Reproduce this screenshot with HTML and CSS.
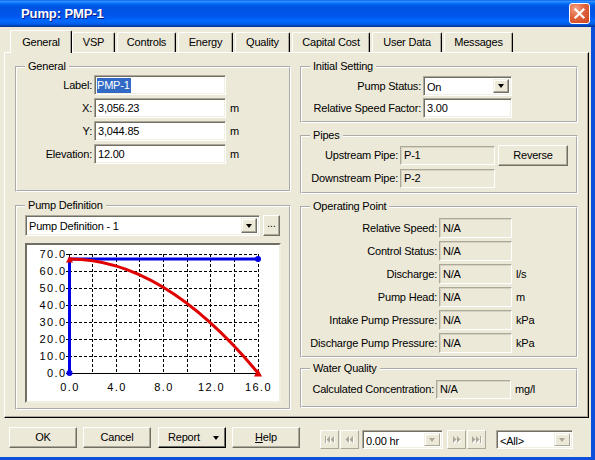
FILE: index.html
```html
<!DOCTYPE html>
<html>
<head>
<meta charset="utf-8">
<title>Pump: PMP-1</title>
<link rel="stylesheet" href="styles.css">
</head>
<body>
<div class="window">
  <div class="titlebar">
    <span class="title">Pump: PMP-1</span>
    <span class="close"><svg width="13" height="13" viewBox="0 0 13 13"><path d="M2.5 2.5 L10.5 10.5 M10.5 2.5 L2.5 10.5" stroke="#fff" stroke-width="2.2" stroke-linecap="square" fill="none"/></svg></span>
  </div>
  <div class="frame">
    <div class="client">
      <div class="tabs">
        <div class="tab active">General</div>
        <div class="tab t-vsp">VSP</div>
        <div class="tab t-controls">Controls</div>
        <div class="tab t-energy">Energy</div>
        <div class="tab t-quality">Quality</div>
        <div class="tab t-capital">Capital Cost</div>
        <div class="tab t-user">User Data</div>
        <div class="tab t-messages">Messages</div>
      </div>
      <div class="panel">
        <div class="col col-left">
          <fieldset class="grp grp-general">
            <legend>General</legend>
            <div class="rows rows-general">
              <div class="row"><span class="lbl lbl-gen">Label:</span><span class="field f-gen"><span class="sel">PMP-1</span></span></div>
              <div class="row"><span class="lbl lbl-gen">X:</span><span class="field f-gen">3,056.23</span><span class="unit">m</span></div>
              <div class="row"><span class="lbl lbl-gen">Y:</span><span class="field f-gen">3,044.85</span><span class="unit">m</span></div>
              <div class="row"><span class="lbl lbl-gen">Elevation:</span><span class="field f-gen">12.00</span><span class="unit">m</span></div>
            </div>
          </fieldset>
          <fieldset class="grp grp-pumpdef">
            <legend>Pump Definition</legend>
            <div class="pumpdef-top">
              <span class="combo combo-def"><span class="combo-text">Pump Definition - 1</span><span class="drop"><i class="tri"></i></span></span>
              <span class="btn-small">...</span>
            </div>
            <div class="chart">
              <svg width="252" height="156" viewBox="0 0 252 156">
                <g class="grid" stroke="#000" stroke-width="1" stroke-dasharray="3 2" fill="none">
                  <path d="M65.5 9 V128 M89.5 9 V128 M112.5 9 V128 M136.5 9 V128 M160.5 9 V128 M183.5 9 V128 M207.5 9 V128 M231.5 9 V128"/>
                  <path d="M42 9.5 H232 M42 26.5 H232 M42 43.5 H232 M42 60.5 H232 M42 77.5 H232 M42 94.5 H232 M42 111.5 H232"/>
                </g>
                <path d="M42.5 9 V128.5 H232 M39 9.5 H42 M39 26.5 H42 M39 43.5 H42 M39 60.5 H42 M39 77.5 H42 M39 94.5 H42 M39 111.5 H42 M39 128.5 H42" stroke="#000" stroke-width="1" fill="none"/>
                <g class="axis-text" font-family="Liberation Sans, Arial, sans-serif" font-size="11" letter-spacing="1.4" fill="#000">
                  <text x="39.5" y="13" text-anchor="end">70.0</text>
                  <text x="39.5" y="30" text-anchor="end">60.0</text>
                  <text x="39.5" y="47" text-anchor="end">50.0</text>
                  <text x="39.5" y="64" text-anchor="end">40.0</text>
                  <text x="39.5" y="81" text-anchor="end">30.0</text>
                  <text x="39.5" y="98" text-anchor="end">20.0</text>
                  <text x="39.5" y="115" text-anchor="end">10.0</text>
                  <text x="39.5" y="132" text-anchor="end">0.0</text>
                  <text x="43" y="146" text-anchor="middle">0.0</text>
                  <text x="90" y="146" text-anchor="middle">4.0</text>
                  <text x="137" y="146" text-anchor="middle">8.0</text>
                  <text x="184.5" y="146" text-anchor="middle">12.0</text>
                  <text x="231.5" y="146" text-anchor="middle">16.0</text>
                </g>
                <path d="M42.5 128 V14 H231" stroke="#0000E6" stroke-width="3" fill="none"/>
                <circle cx="42.5" cy="128" r="3" fill="#0000E6"/>
                <circle cx="231" cy="14" r="3" fill="#0000E6"/>
                <path d="M42.5 14 Q136.5 14 231 128" stroke="#E00000" stroke-width="3" fill="none"/>
                <polygon points="39,17.5 46,17.5 42.5,11" fill="#E00000"/>
                <polygon points="227,131.5 235,131.5 231,124" fill="#E00000"/>
              </svg>
            </div>
          </fieldset>
        </div>
        <div class="col col-right">
          <fieldset class="grp grp-initial">
            <legend>Initial Setting</legend>
            <div class="rows rows-initial">
              <div class="row"><span class="lbl lbl-init">Pump Status:</span><span class="combo combo-status"><span class="combo-text">On</span><span class="drop"><i class="tri"></i></span></span></div>
              <div class="row"><span class="lbl lbl-init">Relative Speed Factor:</span><span class="field f-init">3.00</span></div>
            </div>
          </fieldset>
          <fieldset class="grp grp-pipes">
            <legend>Pipes</legend>
            <div class="rows rows-pipes">
              <div class="row row-21"><span class="lbl lbl-pipe">Upstream Pipe:</span><span class="ro ro-pipe">P-1</span><span class="btn btn-reverse">Reverse</span></div>
              <div class="row row-21"><span class="lbl lbl-pipe">Downstream Pipe:</span><span class="ro ro-pipe">P-2</span></div>
            </div>
          </fieldset>
          <fieldset class="grp grp-op">
            <legend>Operating Point</legend>
            <div class="rows rows-op">
              <div class="row"><span class="lbl lbl-op">Relative Speed:</span><span class="ro ro-op">N/A</span></div>
              <div class="row"><span class="lbl lbl-op">Control Status:</span><span class="ro ro-op">N/A</span></div>
              <div class="row"><span class="lbl lbl-op">Discharge:</span><span class="ro ro-op">N/A</span><span class="unit">l/s</span></div>
              <div class="row"><span class="lbl lbl-op">Pump Head:</span><span class="ro ro-op">N/A</span><span class="unit">m</span></div>
              <div class="row"><span class="lbl lbl-op">Intake Pump Pressure:</span><span class="ro ro-op">N/A</span><span class="unit">kPa</span></div>
              <div class="row"><span class="lbl lbl-op">Discharge Pump Pressure:</span><span class="ro ro-op">N/A</span><span class="unit">kPa</span></div>
            </div>
          </fieldset>
          <fieldset class="grp grp-wq">
            <legend>Water Quality</legend>
            <div class="rows rows-wq">
              <div class="row row-19"><span class="lbl lbl-wq">Calculated Concentration:</span><span class="ro ro-wq">N/A</span><span class="unit">mg/l</span></div>
            </div>
          </fieldset>
        </div>
      </div>
      <div class="bottombar">
        <span class="btn btn-ok">OK</span>
        <span class="btn btn-cancel">Cancel</span>
        <span class="btn btn-report"><span class="report-text">Report</span><i class="tri"></i></span>
        <span class="btn btn-help"><u>H</u>elp</span>
        <div class="nav">
          <span class="navbtn"><svg width="10" height="8" viewBox="0 0 10 8"><g fill="#fff" transform="translate(1,1)"><rect x="0" y="0" width="1" height="7"/><polygon points="5,0 5,7 1.5,3.5"/><polygon points="9,0 9,7 5.5,3.5"/></g><g fill="#ACA899"><rect x="0" y="0" width="1" height="7"/><polygon points="5,0 5,7 1.5,3.5"/><polygon points="9,0 9,7 5.5,3.5"/></g></svg></span>
          <span class="navbtn nb2"><svg width="10" height="8" viewBox="0 0 10 8"><g fill="#fff" transform="translate(1,1)"><polygon points="4,0 4,7 0.5,3.5"/><polygon points="8,0 8,7 4.5,3.5"/></g><g fill="#ACA899"><polygon points="4,0 4,7 0.5,3.5"/><polygon points="8,0 8,7 4.5,3.5"/></g></svg></span>
          <span class="combo combo-time"><span class="combo-text">0.00 hr</span><span class="drop drop-dis"><i class="tri tri-dis"></i></span></span>
          <span class="navbtn nb3"><svg width="10" height="8" viewBox="0 0 10 8"><g fill="#fff" transform="translate(1,1)"><polygon points="1,0 1,7 4.5,3.5"/><polygon points="5,0 5,7 8.5,3.5"/></g><g fill="#ACA899"><polygon points="1,0 1,7 4.5,3.5"/><polygon points="5,0 5,7 8.5,3.5"/></g></svg></span>
          <span class="navbtn nb2"><svg width="10" height="8" viewBox="0 0 10 8"><g fill="#fff" transform="translate(1,1)"><polygon points="0,0 0,7 3.5,3.5"/><polygon points="4,0 4,7 7.5,3.5"/><rect x="8" y="0" width="1" height="7"/></g><g fill="#ACA899"><polygon points="0,0 0,7 3.5,3.5"/><polygon points="4,0 4,7 7.5,3.5"/><rect x="8" y="0" width="1" height="7"/></g></svg></span>
          <span class="combo combo-all"><span class="combo-text">&lt;All&gt;</span><span class="drop drop-dis"><i class="tri tri-dis"></i></span></span>
        </div>
      </div>
    </div>
  </div>
</div>
</body>
</html>
```

FILE: styles.css
```css
* { box-sizing: border-box; }
html, body { margin: 0; padding: 0; }
body {
  width: 595px;
  height: 460px;
  overflow: hidden;
  background: #ECE9D8;
  font-family: "Liberation Sans", Arial, sans-serif;
  font-size: 11px;
  line-height: 13px;
  letter-spacing: -0.2px;
  color: #000;
}
.window { width: 595px; height: 460px; display: flex; flex-direction: column; }

.titlebar {
  flex: none;
  height: 27px;
  display: flex;
  align-items: center;
  padding: 0 5px 0 21px;
  background: linear-gradient(to bottom, #0058EE 0%, #3593FF 4%, #288EFF 7%, #127DFF 10%, #036FFC 13%, #0262EE 17%, #0057E5 22%, #0054E3 28%, #0055EB 56%, #005BF5 66%, #026AFE 76%, #0062EF 86%, #0052D6 92%, #0040AB 96%, #003092 100%);
}
.title {
  flex: 1;
  color: #fff;
  font-weight: bold;
  font-size: 13px;
  letter-spacing: -0.1px;
  text-shadow: 1px 1px 0 #0A1883;
  margin-top: -1px;
}
.close {
  width: 21px;
  height: 21px;
  border: 1px solid #fff;
  border-radius: 3px;
  background: radial-gradient(circle at 30% 25%, #F2A285 0%, #E2633D 45%, #C8431E 100%);
  display: flex;
  align-items: center;
  justify-content: center;
}
.close svg { display: block; }

.frame {
  flex: 1;
  display: flex;
  border-right: 4px solid #0B4FDA;
  border-bottom: 3px solid #0B4FDA;
}
.client {
  flex: 1;
  display: flex;
  flex-direction: column;
  padding-top: 3px;
  background: #ECE9D8;
}

/* tabs */
.tabs { flex: none; display: flex; align-items: flex-end; height: 22px; padding-left: 10px; }
.tab {
  height: 20px;
  line-height: 19px;
  text-align: center;
  margin-right: 2px;
  background: #ECE9D8;
  border-top: 1px solid #fff;
  border-left: 1px solid #fff;
  border-right: 1px solid #000;
  box-shadow: inset -1px 0 0 #ACA899;
  border-radius: 2px 2px 0 0;
  white-space: nowrap;
}
.tab.active {
  width: 62px;
  height: 23px;
  line-height: 22px;
  margin-right: 0;
  margin-bottom: -1px;
  position: relative;
  z-index: 1;
}
.t-vsp { width: 43px; }
.t-controls { width: 59px; }
.t-energy { width: 55px; }
.t-quality { width: 55px; }
.t-capital { width: 78px; }
.t-user { width: 70px; }
.t-messages { width: 69px; }

.panel {
  flex: none;
  margin-left: 4px;
  width: 585px;
  height: 366px;
  border: 1px solid;
  border-color: #fff #000 #000 #fff;
  box-shadow: inset -1px -1px 0 #ACA899;
  display: flex;
  gap: 9px;
  padding: 7px 0 0 10px;
}
.col { display: flex; flex-direction: column; }
.col-left { width: 276px; gap: 7px; }
.col-right { width: 278px; gap: 6px; }

/* group boxes */
.grp {
  margin: 0;
  padding: 0;
  min-width: 0;
  border: 2px groove #fff;
}
.grp legend {
  margin-left: 8px;
  padding: 0 3px;
  line-height: 13px;
  height: 13px;
}
.grp-general { height: 132px; }
.grp-pumpdef { height: 211px; }
.grp-initial { height: 63px; }
.grp-pipes { height: 65px; }
.grp-op { height: 158px; }
.grp-wq { height: 46px; margin-top: -2px; }

.rows { display: flex; flex-direction: column; gap: 3px; }
.rows-general { padding-top: 2px; }
.rows-initial { padding-top: 3px; gap: 2px; }
.rows-pipes { padding-top: 3px; gap: 2px; }
.rows-op { padding-top: 5px; }
.rows-wq { padding-top: 5px; }

.row { display: flex; align-items: center; height: 20px; }
.row-21 { height: 21px; }
.row-19 { height: 19px; }
.lbl { text-align: right; padding-right: 2px; white-space: nowrap; flex: none; }
.lbl-gen { width: 77px; }
.lbl-init { width: 121px; }
.lbl-pipe { width: 98px; }
.lbl-op { width: 137px; }
.lbl-wq { width: 134px; }
.unit { margin-left: 4px; }

.field {
  flex: none;
  height: 20px;
  background: #fff;
  border: 1px solid;
  border-color: #ACA899 #fff #fff #ACA899;
  box-shadow: inset 1px 1px 0 #716F64, inset -1px -1px 0 #F1EFE2;
  padding: 2px 0 0 3px;
  line-height: 14px;
  white-space: nowrap;
}
.f-gen { width: 132px; }
.f-init { width: 89px; }
.sel { background: #316AC5; color: #fff; display: inline-block; line-height: 15px; padding: 0 1px 0 0; margin-left: -1px; }

.ro {
  flex: none;
  background: #ECE9D8;
  border: 1px solid;
  border-color: #ACA899 #fff #fff #ACA899;
  box-shadow: inset 1px 1px 0 #D6D2C2;
  padding-left: 3px;
  white-space: nowrap;
  display: flex;
  align-items: center;
}
.ro-pipe { width: 95px; height: 19px; }
.ro-op { width: 73px; height: 20px; }
.ro-wq { width: 75px; height: 19px; }

/* combos */
.combo {
  flex: none;
  display: flex;
  background: #fff;
  border: 1px solid;
  border-color: #ACA899 #fff #fff #ACA899;
  box-shadow: inset 1px 1px 0 #716F64, inset -1px -1px 0 #F1EFE2;
  padding: 2px;
}
.combo-text { flex: 1; padding-left: 1px; line-height: 16px; white-space: nowrap; }
.drop {
  flex: none;
  width: 16px;
  background: #ECE9D8;
  border: 1px solid;
  border-color: #F1EFE2 #716F64 #716F64 #F1EFE2;
  box-shadow: inset -1px -1px 0 #ACA899, inset 1px 1px 0 #fff;
  display: flex;
  align-items: center;
  justify-content: center;
}
.tri {
  display: block;
  width: 0;
  height: 0;
  border-left: 3.5px solid transparent;
  border-right: 3.5px solid transparent;
  border-top: 4px solid #000;
}
.tri-dis { border-top-color: #ACA899; }
.drop-dis { border-color: #F1EFE2 #ACA899 #ACA899 #F1EFE2; box-shadow: inset 1px 1px 0 #fff; }
.combo-status { width: 89px; height: 20px; }
.combo-def { width: 235px; height: 21px; }
.combo-time { width: 81px; height: 19px; margin: 0 4px 0 3px; }
.combo-all { width: 77px; height: 19px; margin-left: 10px; }

.pumpdef-top { display: flex; padding: 3px 0 0 8px; }
.btn-small {
  width: 17px;
  height: 21px;
  margin-left: 3px;
  background: #ECE9D8;
  border: 1px solid;
  border-color: #fff #716F64 #716F64 #fff;
  box-shadow: inset -1px -1px 0 #ACA899;
  text-align: center;
  line-height: 16px;
  letter-spacing: 0;
  font-size: 10px;
}
.chart {
  width: 256px;
  height: 160px;
  margin: 7px 0 0 8px;
  background: #fff;
  border: 2px solid;
  border-color: #716F64 #F1EFE2 #F1EFE2 #716F64;
  box-shadow: inset 0 0 0 0 transparent;
}
.chart svg { display: block; }
.axis-text { letter-spacing: 1.4px; }

/* buttons */
.btn {
  flex: none;
  display: flex;
  align-items: center;
  justify-content: center;
  background: #ECE9D8;
  border: 1px solid;
  border-color: #fff #716F64 #716F64 #fff;
  box-shadow: inset -1px -1px 0 #ACA899;
  white-space: nowrap;
}
.btn-reverse { width: 70px; height: 21px; margin-left: 3px; }
.bottombar { flex: 1; display: flex; align-items: flex-start; padding: 9px 0 0 9px; }
.btn-ok, .btn-cancel, .btn-report, .btn-help { width: 68px; height: 21px; }
.btn-ok { margin-right: 6px; }
.btn-cancel { margin-right: 7px; }
.btn-report {
  margin-right: 6px;
  border-color: #fff #000 #000 #fff;
  box-shadow: inset -1px -1px 0 #716F64;
  justify-content: flex-start;
  padding-left: 9px;
}
.report-text { margin-right: 13px; }
.btn-help { margin-right: 20px; }
.btn-help u { text-decoration: underline; }

.nav { display: flex; align-items: center; margin-top: 3px; }
.navbtn {
  width: 19px;
  height: 19px;
  background: #ECE9D8;
  border: 1px solid;
  border-color: #fff #ACA899 #ACA899 #fff;
  display: flex;
  align-items: center;
  justify-content: center;
}
.navbtn svg { display: block; }
.nb2 { margin-left: 1px; }
.nb3 { margin-left: 0; }
```
